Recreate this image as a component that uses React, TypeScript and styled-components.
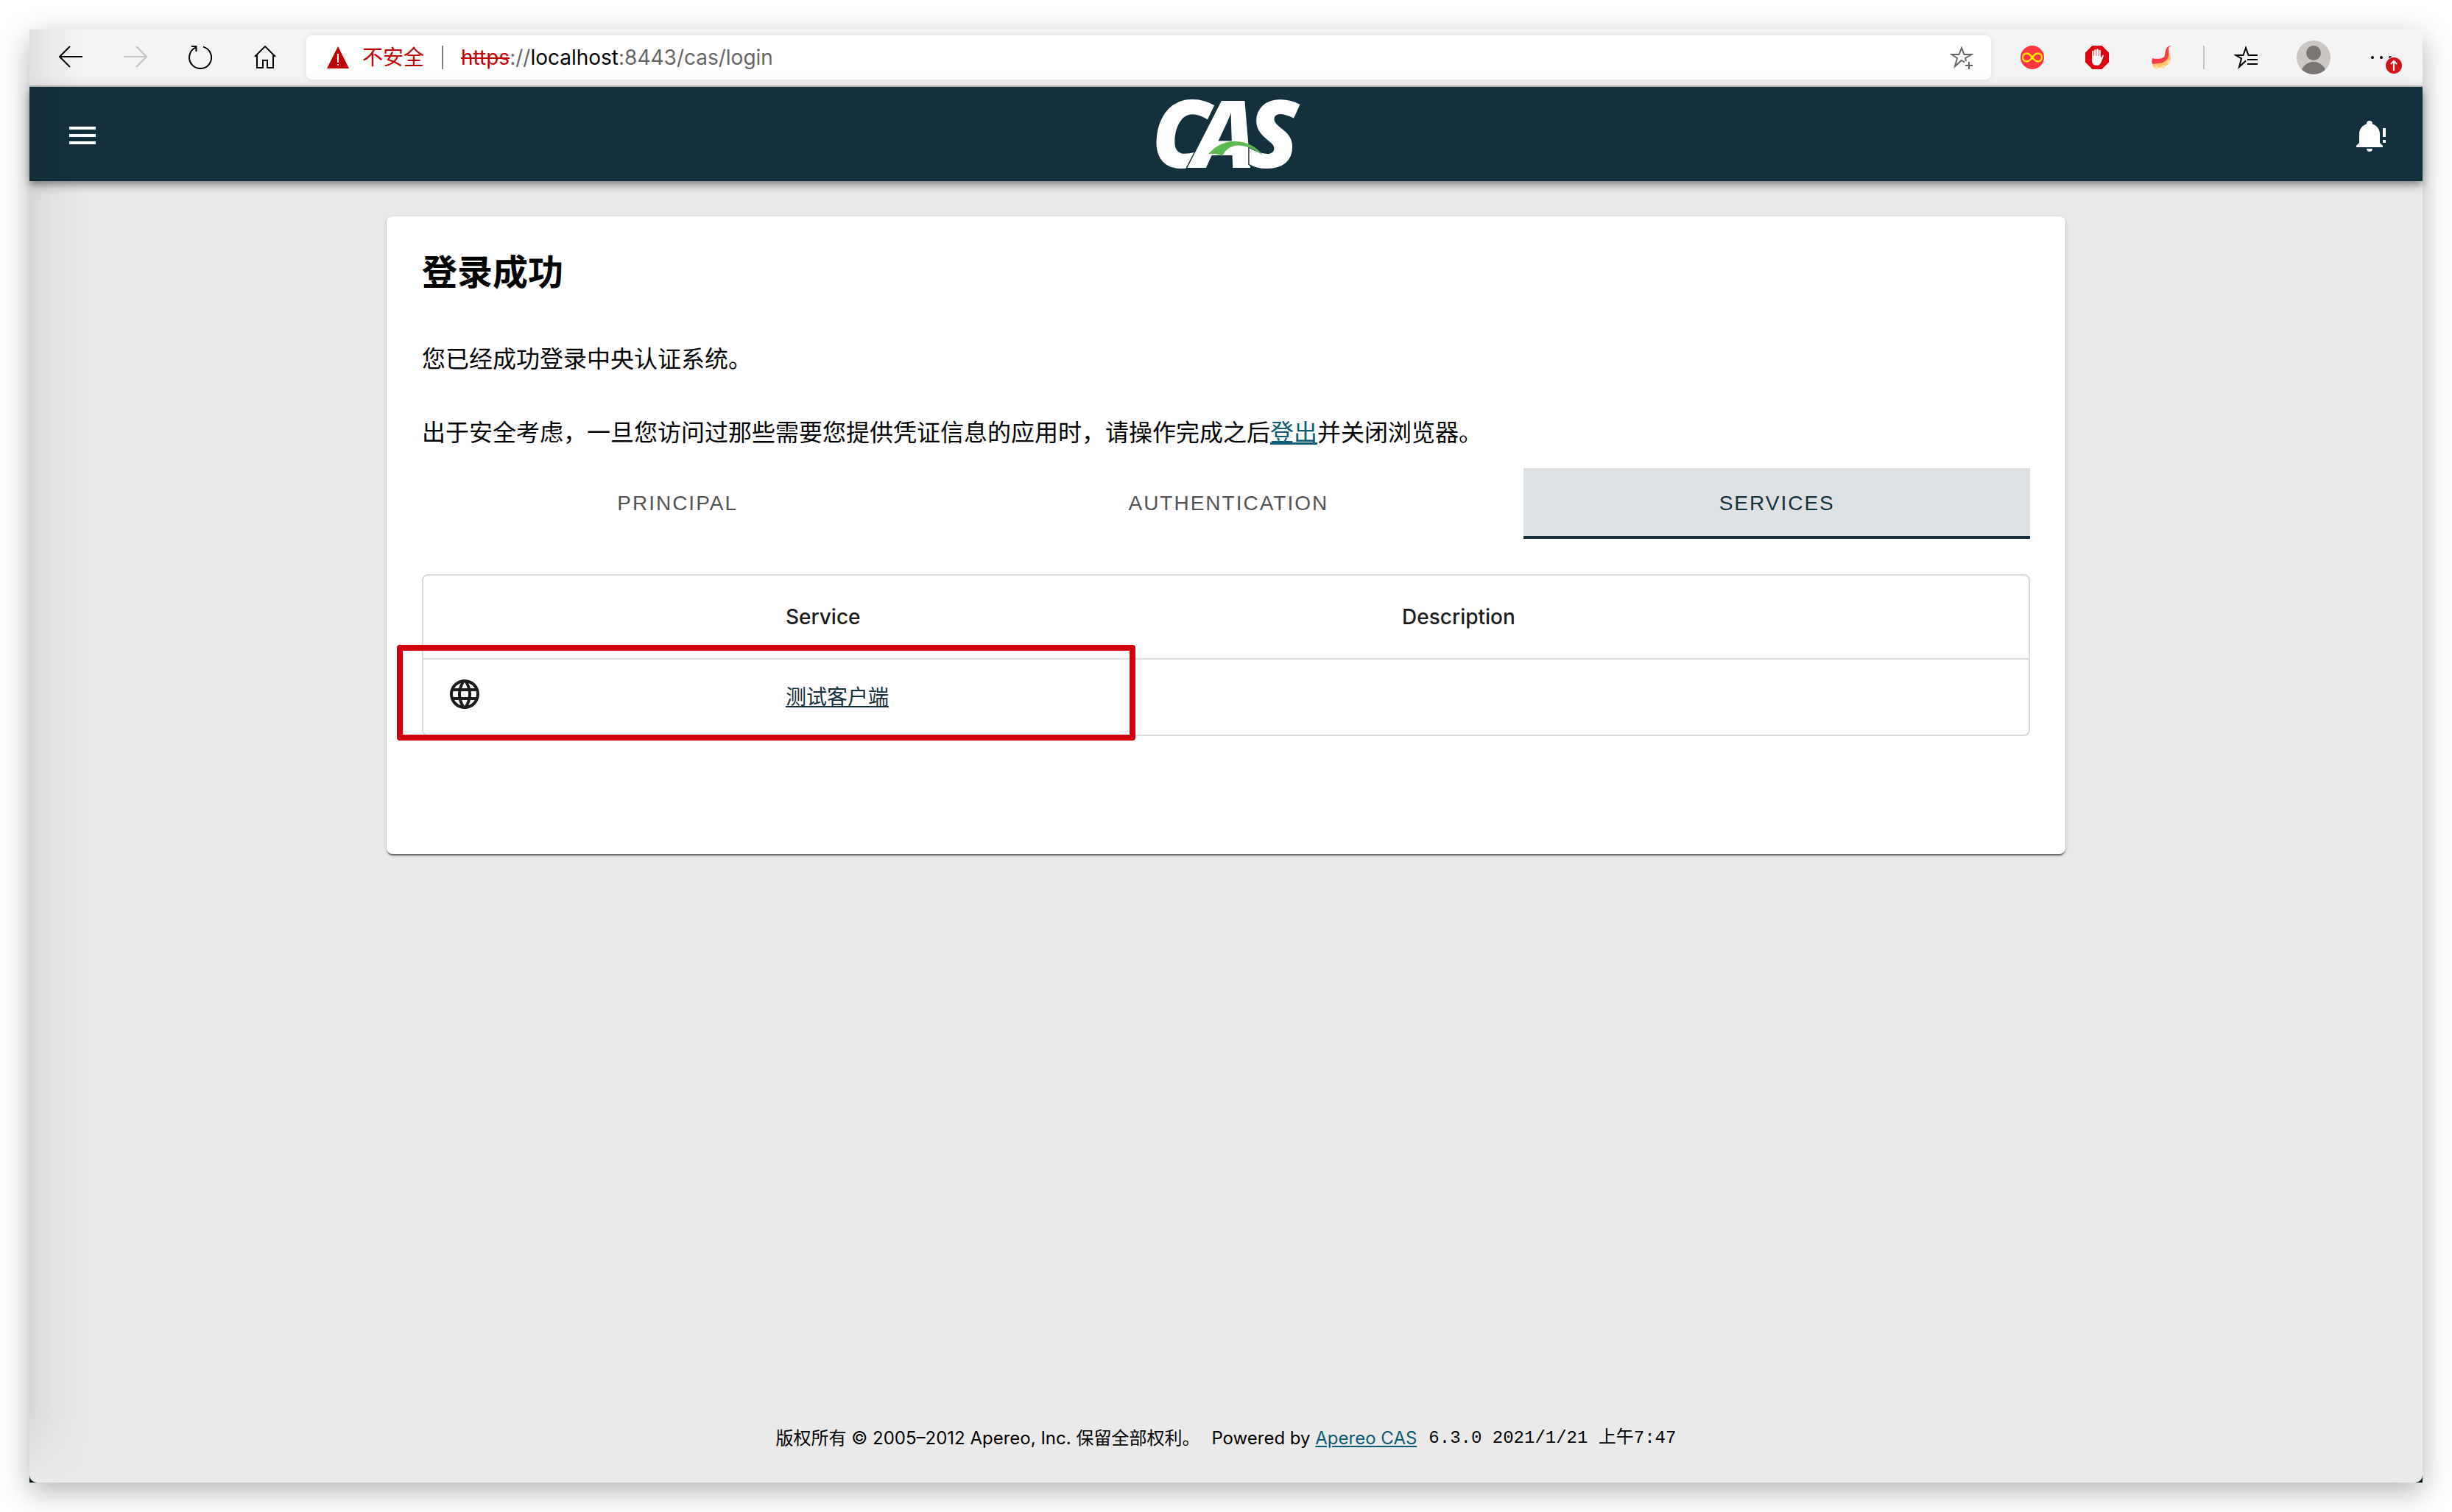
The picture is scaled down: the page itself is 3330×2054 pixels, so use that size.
import React from "react";
import styled, { createGlobalStyle } from "styled-components";

const navy = "#14303d";
const sans = `Inter, "Noto Sans CJK SC", sans-serif`;
const grotesk = `"Liberation Sans", "Noto Sans CJK SC", sans-serif`;

const GlobalStyle = createGlobalStyle`
  *, *::before, *::after { box-sizing: border-box; }
  body { margin: 0; background: #fff; font-family: ${sans}; color: #000; }
  button { border: 0; padding: 0; background: none; color: inherit; font: inherit; cursor: pointer; }
  svg { display: block; }
`;

const Desktop = styled.div`
  min-height: 100vh;
  padding: 40px;
  display: flex;
`;

const WindowFrame = styled.div`
  flex: 1;
  display: flex;
  position: relative;
  background: #0b1a20;
  box-shadow: 0 12px 38px rgba(0, 0, 0, 0.3);

  &::after {
    content: "";
    position: absolute;
    inset: 0 auto 0 0;
    width: 80px;
    pointer-events: none;
    background: linear-gradient(to right, rgba(0, 0, 0, 0.08), rgba(0, 0, 0, 0.03) 40%, transparent);
    mask-image: linear-gradient(to bottom, #000 calc(100% - 100px), transparent);
  }
`;

const Browser = styled.div`
  flex: 1;
  display: flex;
  flex-direction: column;
  background: #eaeaea;
  border-radius: 0 0 10px 10px;
`;

const Toolbar = styled.div`
  display: flex;
  align-items: center;
  gap: 40px;
  height: 78px;
  padding: 0 28px 0 40px;
  background: #f4f4f4;
  border-bottom: 2px solid #c5c5c7;
`;

const ToolGroup = styled.div<{ $gap: number }>`
  display: flex;
  align-items: center;
  gap: ${(p) => p.$gap}px;
`;

const ToolButton = styled.button<{ $muted?: boolean }>`
  color: ${(p) => (p.$muted ? "#c3c3c3" : "#000")};
`;

const Divider = styled.span<{ $dark?: boolean }>`
  width: 2px;
  height: 32px;
  background: ${(p) => (p.$dark ? "#808080" : "#c6c6c6")};
`;

const AddressBar = styled.div`
  flex: 1;
  display: flex;
  align-items: center;
  gap: 24px;
  height: 60px;
  padding: 0 24px 0 28px;
  background: #fff;
  border-radius: 8px;
  box-shadow: 0 0 10px rgba(0, 0, 0, 0.1);
`;

const Security = styled.button`
  display: flex;
  align-items: center;
  gap: 16px;
  color: #c00000;
  font-size: 28px;
  line-height: 40px;
`;

const Url = styled.div`
  flex: 1;
  font-size: 28px;
  line-height: 40px;
  color: #666;

  s { color: #c00000; }
  b { color: #000; font-weight: 400; }
`;

const StarButton = styled.button`
  color: #666;
`;

const AppBar = styled.header`
  display: grid;
  grid-template-columns: 1fr auto 1fr;
  align-items: center;
  height: 128px;
  padding: 4px 48px 0;
  background: ${navy};
  color: #fff;
  box-shadow: 0 4px 8px -2px rgba(0, 0, 0, 0.3), 0 8px 10px rgba(0, 0, 0, 0.16),
    0 2px 20px rgba(0, 0, 0, 0.12);
`;

const BarButton = styled.button<{ $end?: boolean }>`
  justify-self: ${(p) => (p.$end ? "end" : "start")};
`;

const LogoSvg = styled.svg`
  overflow: visible;
`;

const LogoText = styled.text`
  font: italic 800 128px "Open Sans", "Noto Sans", sans-serif;
  fill: #fff;
`;

const Main = styled.main`
  flex: 1;
  padding: 48px 48px 0;
`;

const Card = styled.section`
  max-width: 2280px;
  margin: 0 auto;
  padding: 48px 48px 160px;
  background: #fff;
  border-radius: 8px;
  box-shadow: 0 4px 2px -2px rgba(0, 0, 0, 0.4), 0 2px 2px rgba(0, 0, 0, 0.24),
    0 2px 6px rgba(0, 0, 0, 0.14);
`;

const Title = styled.h2`
  margin: 0 0 72px;
  font-size: 48px;
  line-height: 56px;
  font-weight: 700;
`;

const Paragraph = styled.p`
  margin: 0 0 64px;
  font-size: 32px;
  line-height: 36px;

  & + & { margin-bottom: 30px; }
`;

const Link = styled.a`
  color: #0f5b74;
  text-decoration: underline;
`;

const Tabs = styled.div`
  display: flex;
`;

const Tab = styled.button<{ $active?: boolean }>`
  flex: 1 0 auto;
  height: 96px;
  padding: 4px 48px 0;
  border-bottom: 4px solid ${(p) => (p.$active ? navy : "transparent")};
  background: ${(p) => (p.$active ? "#dde1e4" : "transparent")};
  color: ${(p) => (p.$active ? navy : "#535353")};
  font-family: ${grotesk};
  font-size: 28px;
  letter-spacing: 2px;
  text-transform: uppercase;
`;

const TableFrame = styled.div`
  position: relative;
  margin-top: 48px;
  border: 2px solid #dadada;
  border-radius: 8px;
`;

const Table = styled.table`
  width: 100%;
  table-layout: fixed;
  border-collapse: collapse;
  font-size: 28px;
  color: #1c1c1c;
`;

const HeadCell = styled.th<{ $width: string }>`
  width: ${(p) => p.$width};
  height: 113px;
  padding: 0 32px;
  border-bottom: 2px solid #dadada;
  font-weight: 500;
  text-align: left;
`;

const Cell = styled.td`
  height: 103px;
  padding: 0 32px 4px;
`;

const IconCell = styled(Cell)`
  padding-bottom: 8px;
`;

const ServiceLink = styled(Link)`
  color: ${navy};
`;

const Highlight = styled.div`
  position: absolute;
  top: 94px;
  bottom: -8px;
  left: -36px;
  width: 46%;
  border: 8px solid #d0000e;
  border-radius: 4px;
  pointer-events: none;
`;

const Footer = styled.footer`
  display: flex;
  justify-content: center;
  gap: 16px;
  padding-bottom: 44px;
  font-size: 24px;
  line-height: 32px;
`;

const Version = styled.samp`
  font-family: "Liberation Mono", "Noto Sans CJK SC", monospace;
`;

const Svg = ({ size = 32, box = 32, children, ...rest }: any) => (
  <svg width={size} height={size} viewBox={`0 0 ${box} ${box}`} fill="none" aria-hidden="true" {...rest}>
    {children}
  </svg>
);

const BackIcon = () => (
  <Svg stroke="currentColor" strokeWidth="2">
    <path d="M32 15H1M15 1 1 15l14 14" />
  </Svg>
);

const ForwardIcon = () => (
  <Svg stroke="currentColor" strokeWidth="2">
    <path d="M0 15h31M17 1l14 14-14 14" />
  </Svg>
);

const ReloadIcon = () => (
  <Svg stroke="currentColor" strokeWidth="2">
    <path d="M20 1.6a15 15 0 1 1-10.500 1M4 1h6.500v7" />
  </Svg>
);

const HomeIcon = () => (
  <Svg stroke="currentColor" strokeWidth="2">
    <path d="M2 15 16 1l14 14M5 13v17h8V20h6v10h8V13" />
  </Svg>
);

const WarningIcon = () => (
  <Svg>
    <path d="M15 1 30 31H0z" fill="#c00000" />
    <path d="M15 11v12M15 25v2" stroke="#fff" strokeWidth="2" />
  </Svg>
);

const AddStarIcon = () => (
  <Svg stroke="currentColor" strokeWidth="2">
    <path d="M20 22.500 16 20 7 28l3-11L2.500 12h10L16 3l3.500 9h10L21 17l1 4M26 22v10M21 27h10" />
  </Svg>
);

const InfinityIcon = () => (
  <Svg>
    <circle cx="16" cy="16" r="16" fill="#ff3540" />
    <path
      d="M16 16c-3-4-5-5.500-7.500-5.500a5.500 5.500 0 0 0 0 11C11 21.500 13 20 16 16s5-5.500 7.500-5.500a5.500 5.500 0 0 1 0 11C21 21.500 19 20 16 16z"
      stroke="#ffe70a"
      strokeWidth="2.400"
    />
  </Svg>
);

const BlockIcon = () => (
  <Svg>
    <path d="M9.500 0h13L32 9.500v13L22.500 32h-13L0 22.500v-13z" fill="#de0010" />
    <path
      d="M9 17V8a1.200 1.200 0 0 1 2.400 0v6h.7V6a1.300 1.300 0 0 1 2.500 0v8h.7V5.200a1.300 1.300 0 0 1 2.500 0V14h.7V6.500a1.300 1.300 0 0 1 2.400 0V17l2.100-3.600c.9-1 2.300-.5 2 .6L22 21.500c-1.200 3.500-3 5.500-6.500 5.500C11 27 9 24 9 20z"
      fill="#fff"
    />
  </Svg>
);

const TentacleIcon = () => (
  <Svg>
    <path
      d="M28 1c-3 3-2 7-1 12 2 6 0 11-5 14-4 3-13 4-18 2l-1-6 13-3 6-9z"
      fill="#ffc36b"
    />
    <circle cx="9" cy="29.500" r="2.500" fill="#ffe0a0" />
    <circle cx="18" cy="28.500" r="2.500" fill="#ffe0a0" />
    <circle cx="25" cy="22" r="2.200" fill="#ffe0a0" />
    <path
      d="M29 1c-3-.5-4.500 2-4 5 .5 5 1 10-3.500 14C17 25 8 24 3 25c-1-3-.5-6 0-8 6 1.500 12 1 15-1 3-2 2-6 3-9 1-4.500 4-7.500 8-6z"
      fill="#ff3b46"
    />
  </Svg>
);

const FavoritesIcon = () => (
  <Svg stroke="currentColor" strokeWidth="2">
    <path d="M16 20.500 7 29l3-11.500L2.500 13h10L16 3l3.500 10H32M18 19h14M18 25h14" />
  </Svg>
);

const AvatarIcon = () => (
  <Svg size={48} box={48}>
    <clipPath id="avatar">
      <circle cx="24" cy="24" r="23" />
    </clipPath>
    <circle cx="24" cy="24" r="23" fill="#cbc7c4" />
    <g clipPath="url(#avatar)" fill="#7a7572">
      <circle cx="24" cy="18" r="10" />
      <ellipse cx="24" cy="46" rx="17" ry="16" />
    </g>
  </Svg>
);

const MoreIcon = () => (
  <svg width="44" height="46" viewBox="0 0 44 46" aria-hidden="true">
    <circle cx="4" cy="23" r="2" />
    <circle cx="16" cy="23" r="2" />
    <circle cx="28" cy="23" r="2" />
    <circle cx="33" cy="34" r="12" fill="#f4f4f4" />
    <circle cx="33" cy="34" r="11" fill="#d2151b" />
    <path d="M33 41V28M29 32l4-4 4 4" fill="none" stroke="#fff" strokeWidth="2" />
  </svg>
);

const MenuIcon = () => (
  <Svg size={48} box={24}>
    <path d="M3 6h18v2H3zM3 11h18v2H3zM3 16h18v2H3z" fill="currentColor" />
  </Svg>
);

const BellAlertIcon = () => (
  <Svg size={48} box={24}>
    <path
      d="M23 7v6h-2V7zM21 15h2v2h-2zM12 2a2 2 0 0 0-2 2v.29C7.120 5.140 5 7.820 5 11v6l-2 2v1h18v-1l-2-2v-6c0-3.180-2.120-5.860-5-6.710V4a2 2 0 0 0-2-2M10 21a2 2 0 0 0 4 0z"
      fill="currentColor"
    />
  </Svg>
);

const GlobeIcon = () => (
  <Svg size={48} box={24}>
    <path
      fill="#1c1c1c"
      d="M16.36,14C16.44,13.34 16.5,12.68 16.5,12C16.5,11.32 16.44,10.66 16.36,10H19.74C19.9,10.64 20,11.31 20,12C20,12.69 19.9,13.36 19.74,14M14.59,19.56C15.19,18.45 15.65,17.25 15.97,16H18.92C17.96,17.65 16.43,18.93 14.59,19.56M14.34,14H9.66C9.56,13.34 9.5,12.68 9.5,12C9.5,11.32 9.56,10.65 9.66,10H14.34C14.43,10.65 14.5,11.32 14.5,12C14.5,12.68 14.43,13.34 14.34,14M12,19.96C11.17,18.76 10.5,17.43 10.09,16H13.91C13.5,17.43 12.83,18.76 12,19.96M8,8H5.08C6.03,6.34 7.57,5.06 9.4,4.44C8.8,5.55 8.35,6.75 8,8M5.08,16H8C8.35,17.25 8.8,18.45 9.4,19.56C7.57,18.93 6.03,17.65 5.08,16M4.26,14C4.1,13.36 4,12.69 4,12C4,11.31 4.1,10.64 4.26,10H7.64C7.56,10.66 7.5,11.32 7.5,12C7.5,12.68 7.56,13.34 7.64,14M12,4.03C12.83,5.23 13.5,6.57 13.91,8H10.09C10.5,6.57 11.17,5.23 12,4.03M18.92,8H15.97C15.65,6.75 15.19,5.55 14.59,4.44C16.43,5.07 17.96,6.34 18.92,8M12,2C6.47,2 2,6.5 2,12A10,10 0 0,0 12,22A10,10 0 0,0 22,12A10,10 0 0,0 12,2Z"
    />
  </Svg>
);

const Logo = () => (
  <LogoSvg width="190" height="100" viewBox="0 0 190 100" role="img" aria-label="CAS">
    <LogoText x="-6 50 124" y="94" stroke={navy} strokeWidth="3" paintOrder="stroke">
      CAS
    </LogoText>
    <path
      d="M71 75Q88 57 108 58Q132 59 145 77Q128 64 112 63.500C102 64 95 68 90 78Q84 74 71 75z"
      fill="#5cb851"
    />
  </LogoSvg>
);

export default function App() {
  return (
    <Desktop>
      <GlobalStyle />
      <WindowFrame>
        <Browser>
          <Toolbar>
            <ToolGroup $gap={56}>
              <ToolButton aria-label="返回"><BackIcon /></ToolButton>
              <ToolButton aria-label="前进" $muted><ForwardIcon /></ToolButton>
              <ToolButton aria-label="刷新"><ReloadIcon /></ToolButton>
              <ToolButton aria-label="主页"><HomeIcon /></ToolButton>
            </ToolGroup>
            <AddressBar>
              <Security><WarningIcon />不安全</Security>
              <Divider $dark />
              <Url><s>https</s>://<b>localhost</b>:8443/cas/login</Url>
              <StarButton aria-label="收藏"><AddStarIcon /></StarButton>
            </AddressBar>
            <ToolGroup $gap={56}>
              <ToolButton aria-label="Infinity"><InfinityIcon /></ToolButton>
              <ToolButton aria-label="AdBlock"><BlockIcon /></ToolButton>
              <ToolButton aria-label="Tentacle"><TentacleIcon /></ToolButton>
            </ToolGroup>
            <Divider />
            <ToolGroup $gap={52}>
              <ToolButton aria-label="收藏夹"><FavoritesIcon /></ToolButton>
              <ToolButton aria-label="个人资料"><AvatarIcon /></ToolButton>
              <ToolButton aria-label="更多"><MoreIcon /></ToolButton>
            </ToolGroup>
          </Toolbar>

          <AppBar>
            <BarButton aria-label="menu"><MenuIcon /></BarButton>
            <Logo />
            <BarButton aria-label="notifications" $end><BellAlertIcon /></BarButton>
          </AppBar>

          <Main>
            <Card>
              <Title>登录成功</Title>
              <Paragraph>您已经成功登录中央认证系统。</Paragraph>
              <Paragraph>
                出于安全考虑，一旦您访问过那些需要您提供凭证信息的应用时，请操作完成之后<Link href="#logout">登出</Link>并关闭浏览器。
              </Paragraph>
              <Tabs role="tablist">
                <Tab role="tab">Principal</Tab>
                <Tab role="tab">Authentication</Tab>
                <Tab role="tab" aria-selected $active>Services</Tab>
              </Tabs>
              <TableFrame>
                <Table>
                  <thead>
                    <tr>
                      <HeadCell $width="21.1%" aria-label="Type" />
                      <HeadCell $width="38.4%">Service</HeadCell>
                      <HeadCell $width="auto">Description</HeadCell>
                    </tr>
                  </thead>
                  <tbody>
                    <tr>
                      <IconCell><GlobeIcon /></IconCell>
                      <Cell><ServiceLink href="#service">测试客户端</ServiceLink></Cell>
                      <Cell />
                    </tr>
                  </tbody>
                </Table>
                <Highlight />
              </TableFrame>
            </Card>
          </Main>

          <Footer>
            <span>版权所有 © 2005–2012 Apereo, Inc. 保留全部权利。</span>
            <span>Powered by <Link href="#apereo">Apereo CAS</Link></span>
            <Version>6.3.0 2021/1/21 上午7:47</Version>
          </Footer>
        </Browser>
      </WindowFrame>
    </Desktop>
  );
}
